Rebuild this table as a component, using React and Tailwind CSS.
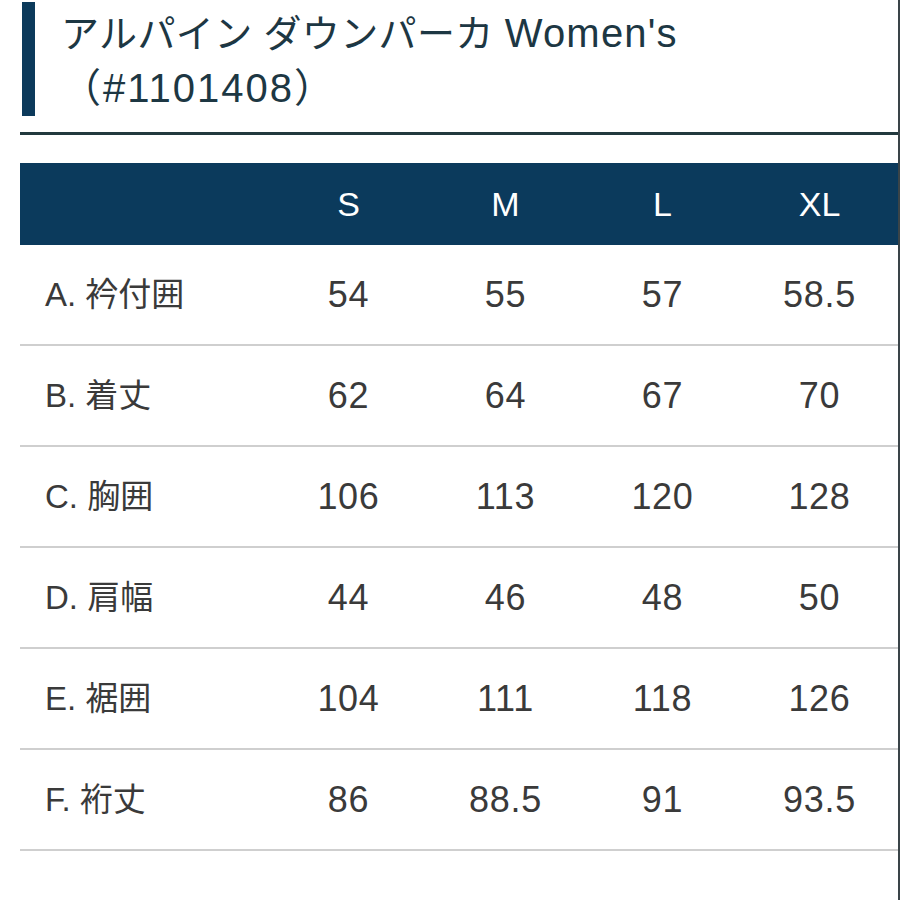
import React from 'react';

const sizes = ['S', 'M', 'L', 'XL'];

const rows = [
    { label: 'A. 衿付囲', values: ['54', '55', '57', '58.5'] },
    { label: 'B. 着丈', values: ['62', '64', '67', '70'] },
    { label: 'C. 胸囲', values: ['106', '113', '120', '128'] },
    { label: 'D. 肩幅', values: ['44', '46', '48', '50'] },
    { label: 'E. 裾囲', values: ['104', '111', '118', '126'] },
    { label: 'F. 裄丈', values: ['86', '88.5', '91', '93.5'] },
];

const font = { fontFamily: '"Liberation Sans", "Noto Sans CJK JP", sans-serif' };

const App = () => {
    return (
        <div className="w-[900px] h-[900px] bg-white border-r-2 border-[#3a4448] overflow-hidden" style={font}>
            {/* Title */}
            <div className="flex pl-[22px] pt-[2px]">
                <div className="w-[13px] h-[114px] bg-[#0c3a5b] flex-shrink-0" />
                <h1 className="ml-[26px] mt-[4px] text-[38px] leading-[54px] tracking-[0.01em] text-[#1d3743] font-normal">
                    アルパイン ダウンパーカ <span className="text-[40px] tracking-[0.03em]">Women's</span>
                    <br />
                    <span className="text-[40px] tracking-[0.05em]">（#1101408）</span>
                </h1>
            </div>

            <div className="ml-5 mt-[16px] h-[3px] bg-[#22393e]" />

            {/* Size table */}
            <div className="ml-5 mt-[28px]">
                <div className="grid grid-cols-[250px_repeat(4,157px)] h-[82px] bg-[#0b3a5c] text-white text-[34px]">
                    <div />
                    {sizes.map((s) => (
                        <div key={s} className="flex items-center justify-center">{s}</div>
                    ))}
                </div>

                {rows.map((row) => (
                    <div
                        key={row.label}
                        className="grid grid-cols-[250px_repeat(4,157px)] h-[101px] border-b-2 border-[#cfcfcf] text-[#3a3a3a]"
                    >
                        <div className="flex items-center pl-[25px] pt-[1px] text-[33px]">{row.label}</div>
                        {row.values.map((v, i) => (
                            <div key={i} className="flex items-center justify-center pt-[1px] text-[36px] tracking-[0.02em]">{v}</div>
                        ))}
                    </div>
                ))}
            </div>
        </div>
    );
};

export default App;
